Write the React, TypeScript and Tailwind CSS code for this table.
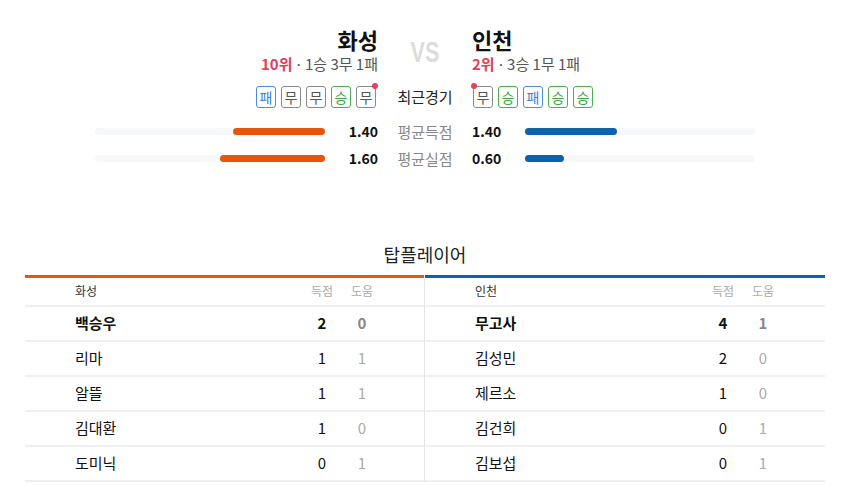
import React from "react";

type Result = "승" | "무" | "패";

const home = {
  name: "화성",
  rank: "10위",
  record: "1승 3무 1패",
  form: ["패", "무", "무", "승", "무"] as Result[],
};
const away = {
  name: "인천",
  rank: "2위",
  record: "3승 1무 1패",
  form: ["무", "승", "패", "승", "승"] as Result[],
};

const averages = [
  { label: "평균득점", home: 1.4, away: 1.4 },
  { label: "평균실점", home: 1.6, away: 0.6 },
];

const homePlayers = [
  { name: "백승우", goals: 2, assists: 0 },
  { name: "리마", goals: 1, assists: 1 },
  { name: "알뜰", goals: 1, assists: 1 },
  { name: "김대환", goals: 1, assists: 0 },
  { name: "도미닉", goals: 0, assists: 1 },
];
const awayPlayers = [
  { name: "무고사", goals: 4, assists: 1 },
  { name: "김성민", goals: 2, assists: 0 },
  { name: "제르소", goals: 1, assists: 0 },
  { name: "김건희", goals: 0, assists: 1 },
  { name: "김보섭", goals: 0, assists: 1 },
];

const MAX = 3.5;

const formStyle: Record<Result, string> = {
  승: "border-[#4cae4f] text-[#3fa443]",
  무: "border-[#8a8a8a] text-[#555]",
  패: "border-[#4a8fd8] text-[#3b7fcf]",
};

const FormBox = ({ r, dot }: { r: Result; dot?: "left" | "right" }) => (
  <span
    className={`relative flex h-[22px] w-[20px] items-center justify-center rounded-[3px] border text-[14px] leading-none ${formStyle[r]}`}
  >
    {r}
    {dot === "right" && (
      <span className="absolute -right-[3px] -top-[4px] size-[6px] rounded-full bg-[#e8405a]" />
    )}
    {dot === "left" && (
      <span className="absolute -left-[3px] -top-[4px] size-[6px] rounded-full bg-[#e8405a]" />
    )}
  </span>
);

const PlayerTable = ({
  team,
  players,
  color,
  border,
}: {
  team: string;
  players: typeof homePlayers;
  color: string;
  border?: boolean;
}) => (
  <div className={`flex flex-col ${border ? "border-r border-[#e6e6e6]" : ""}`}>
    <div className={`h-[3px] ${color}`} />
    <div className="flex h-[29px] items-center border-b-2 border-[#f0f0f0] pl-[50px] pr-[42px] text-[12px]">
      <span className="flex-1 text-[#333]">{team}</span>
      <span className="w-[40px] text-center text-[#aaa]">득점</span>
      <span className="w-[40px] text-center text-[#aaa]">도움</span>
    </div>
    {players.map((p, i) => (
      <div
        key={p.name}
        className={`flex h-[35px] items-center border-b-2 border-[#f0f0f0] pl-[50px] pr-[42px] text-[15px] ${
          i === 0 ? "font-bold" : ""
        }`}
      >
        <span className="flex-1 text-[#111]">{p.name}</span>
        <span className="w-[40px] text-center text-[#111]">{p.goals}</span>
        <span className={`w-[40px] text-center ${i === 0 ? "text-[#888]" : "text-[#aaa]"}`}>
          {p.assists}
        </span>
      </div>
    ))}
  </div>
);

const TeamHead = ({ team, align }: { team: typeof home; align: "items-end" | "items-start" }) => (
  <div className={`flex flex-col gap-[2px] ${align}`}>
    <span className="text-[22px] font-bold leading-[26px]">{team.name}</span>
    <span className="text-[15px] leading-[19px] text-[#555]">
      <b className="font-bold text-[#e0405a]">{team.rank}</b>
      <span className="mx-[2px]">·</span>
      {team.record}
    </span>
  </div>
);

export default function App() {
  return (
    <div
      className="h-[486px] w-[850px] overflow-hidden bg-white text-[#111]"
      style={{ fontFamily: '"Noto Sans CJK KR", "Noto Sans", sans-serif' }}
    >
      {/* match header */}
      <div className="grid grid-cols-[378px_94px_378px] pt-[26px]">
        <TeamHead team={home} align="items-end" />
        <div className="flex items-start justify-center pt-[11px]">
          <span
            className="inline-block scale-x-[0.72] text-[30px] font-bold leading-none text-[#dcdcdc]"
            style={{ fontFamily: '"Liberation Sans", sans-serif' }}
          >
            VS
          </span>
        </div>
        <TeamHead team={away} align="items-start" />
      </div>

      {/* recent form */}
      <div className="mt-[13px] grid grid-cols-[378px_94px_378px] items-center">
        <div className="flex justify-end gap-[5px] pr-[2px]">
          {home.form.map((r, i) => (
            <FormBox key={i} r={r} dot={i === home.form.length - 1 ? "right" : undefined} />
          ))}
        </div>
        <span className="text-center text-[15px] text-[#222]">최근경기</span>
        <div className="flex gap-[5px] pl-[1px]">
          {away.form.map((r, i) => (
            <FormBox key={i} r={r} dot={i === 0 ? "left" : undefined} />
          ))}
        </div>
      </div>

      {/* averages */}
      <div className="mt-[12px] flex flex-col gap-[7px]">
        {averages.map((a) => (
          <div key={a.label} className="grid h-[20px] grid-cols-[378px_94px_378px] items-center">
            <div className="flex items-center justify-end">
              <div className="flex h-[7px] w-[230px] justify-end rounded-full bg-[#f7f8fa]">
                <div
                  className="h-full rounded-full bg-[#e8540a]"
                  style={{ width: `${(a.home / MAX) * 100}%` }}
                />
              </div>
              <span className="w-[53px] text-right text-[14px] font-bold">{a.home.toFixed(2)}</span>
            </div>
            <span className="text-center text-[15px] text-[#888]">{a.label}</span>
            <div className="flex items-center">
              <span className="w-[53px] text-[14px] font-bold">{a.away.toFixed(2)}</span>
              <div className="flex h-[7px] w-[230px] rounded-full bg-[#f7f8fa]">
                <div
                  className="h-full rounded-full bg-[#0b62ae]"
                  style={{ width: `${(a.away / MAX) * 100}%` }}
                />
              </div>
            </div>
          </div>
        ))}
      </div>

      {/* top players */}
      <div className="mt-[74px] text-center text-[18px] leading-[24px] text-[#222]">탑플레이어</div>
      <div className="mx-[25px] mt-[9px] grid grid-cols-2">
        <PlayerTable team={home.name} players={homePlayers} color="bg-[#dd5a14]" border />
        <PlayerTable team={away.name} players={awayPlayers} color="bg-[#0b62ae]" />
      </div>
    </div>
  );
}
